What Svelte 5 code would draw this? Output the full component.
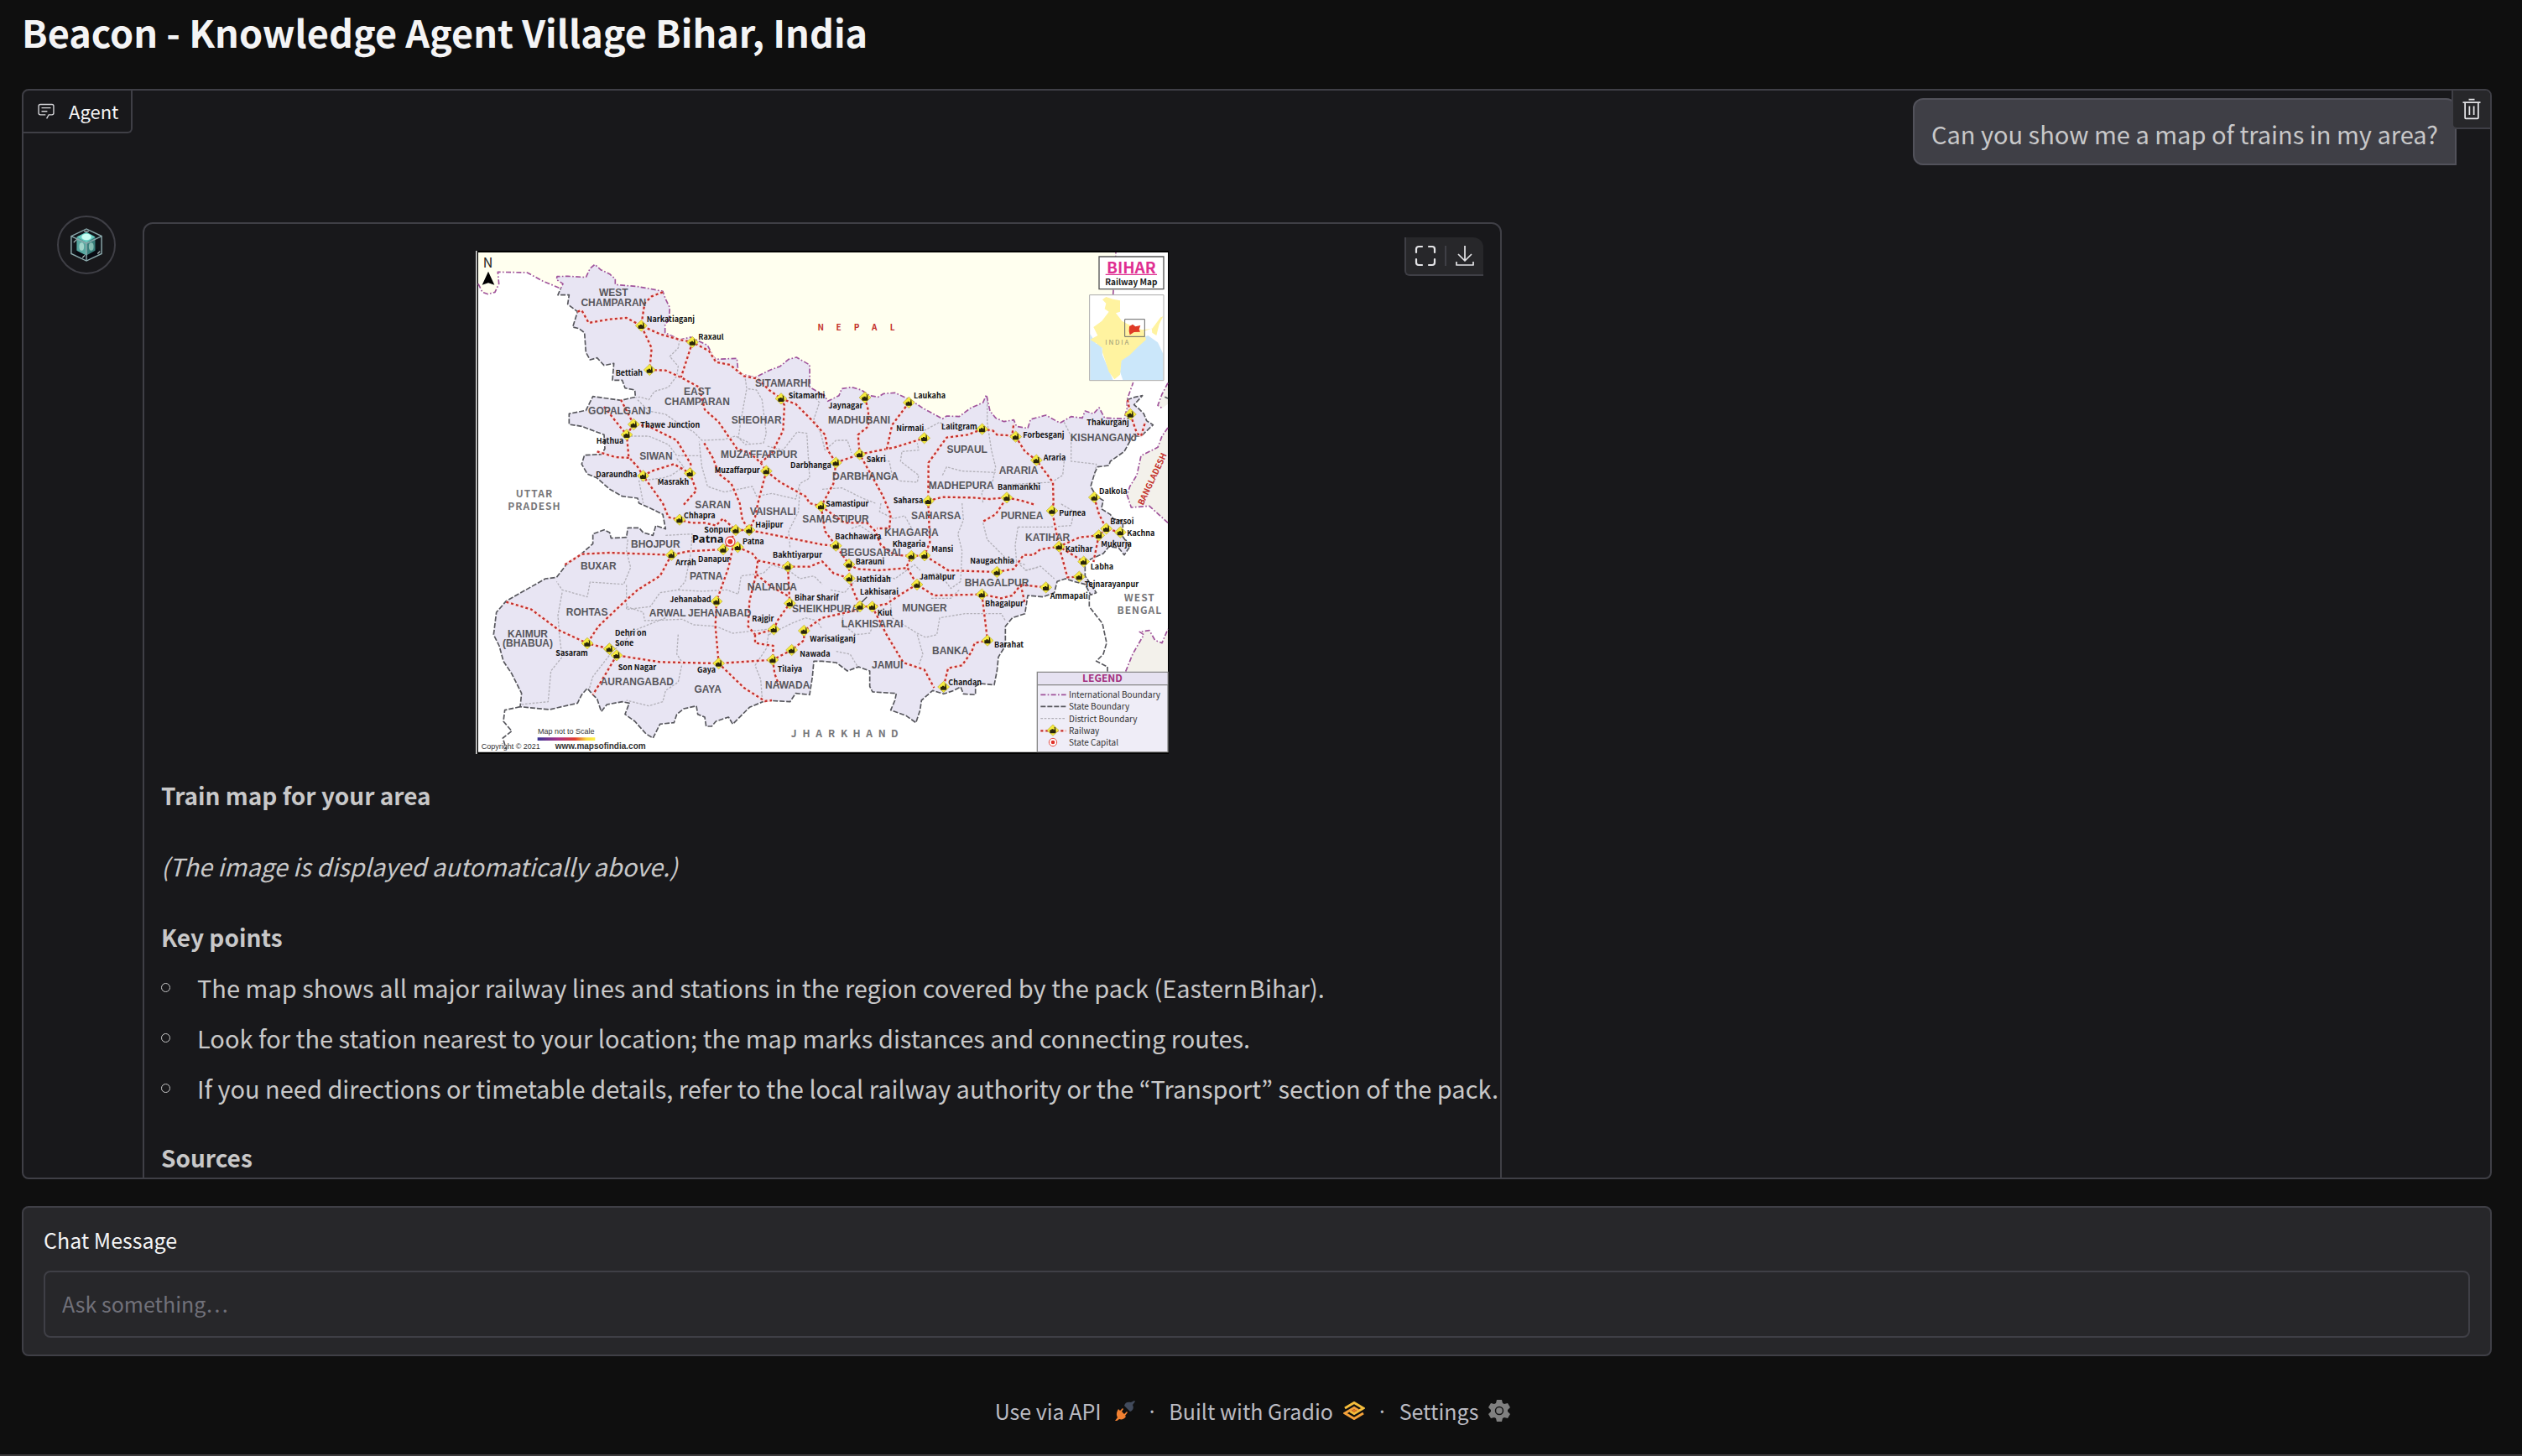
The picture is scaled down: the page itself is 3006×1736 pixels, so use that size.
<script>
    let message = "";

    const points = [
        "The map shows all major railway lines and stations in the region covered by the pack (Eastern\u200aBihar).",
        "Look for the station nearest to your location; the map marks distances and connecting routes.",
        "If you need directions or timetable details, refer to the local railway authority or the “Transport” section of the pack."
    ];

    // name, text x, text y, marker x, marker y
    const stations = [
        ["Narkatiaganj", 632, 281, 613, 295],
        ["Raxaul", 817, 344, 796, 354],
        ["Bettiah", 521, 475, 643, 453],
        ["Thawe Junction", 610, 661, 586, 648],
        ["Hathua", 452, 717, 561, 685],
        ["Daraundha", 451, 838, 620, 832],
        ["Masrakh", 671, 863, 787, 823],
        ["Sitamarhi", 1139, 554, 1113, 556],
        ["Muzaffarpur", 875, 821, 1060, 815],
        ["Darbhanga", 1146, 805, 1309, 785],
        ["Jaynagar", 1282, 591, 1413, 552],
        ["Laukaha", 1587, 556, 1570, 570],
        ["Nirmali", 1525, 673, 1625, 697],
        ["Lalitgram", 1686, 665, 1832, 665],
        ["Forbesganj", 1978, 697, 1952, 692],
        ["Thakurganj", 2206, 650, 2362, 612],
        ["Sakri", 1418, 784, 1394, 755],
        ["Araria", 2051, 777, 2026, 776],
        ["Banmankhi", 1887, 883, 1920, 910],
        ["Dalkola", 2250, 897, 2233, 909],
        ["Saharsa", 1514, 930, 1639, 922],
        ["Samastipur", 1273, 941, 1256, 941],
        ["Purnea", 2107, 975, 2082, 957],
        ["Barsoi", 2290, 1004, 2276, 1021],
        ["Kachna", 2350, 1048, 2326, 1034],
        ["Mukurja", 2257, 1087, 2249, 1045],
        ["Katihar", 2129, 1103, 2107, 1085],
        ["Labha", 2219, 1168, 2195, 1139],
        ["Tejnarayanpur", 2198, 1230, 2179, 1193],
        ["Ammapali", 2075, 1271, 2060, 1231],
        ["Chhapra", 765, 985, 750, 989],
        ["Sonpur", 838, 1034, 951, 1026],
        ["Hajipur", 1021, 1018, 999, 1026],
        ["Patna", 975, 1077, 958, 1087],
        ["Danapur", 816, 1140, 906, 1095],
        ["Arrah", 736, 1151, 721, 1115],
        ["Bakhtiyarpur", 1083, 1126, 1137, 1157],
        ["Jehanabad", 715, 1285, 882, 1281],
        ["Bihar Sharif", 1161, 1279, 1144, 1288],
        ["Rajgir", 1009, 1353, 1087, 1381],
        ["Warisaliganj", 1216, 1425, 1195, 1386],
        ["Nawada", 1180, 1480, 1151, 1455],
        ["Tilaiya", 1100, 1532, 1083, 1490],
        ["Gaya", 813, 1535, 890, 1503],
        ["Sasaram", 307, 1475, 420, 1431],
        ["Dehri on", 519, 1403, 499, 1451],
        ["Sone", 519, 1439, 499, 1451],
        ["Son Nagar", 530, 1527, 525, 1474],
        ["Bachhawara", 1306, 1060, 1309, 1082],
        ["Barauni", 1379, 1149, 1356, 1149],
        ["Khagaria", 1511, 1086, 1579, 1119],
        ["Mansi", 1651, 1104, 1626, 1117],
        ["Hathidah", 1382, 1213, 1357, 1199],
        ["Jamalpur", 1607, 1202, 1599, 1221],
        ["Lakhisarai", 1395, 1258, 1395, 1299],
        ["Kiul", 1457, 1333, 1439, 1300],
        ["Naugachhia", 1789, 1147, 1885, 1176],
        ["Bhagalpur", 1842, 1300, 1831, 1256],
        ["Barahat", 1875, 1447, 1851, 1421],
        ["Chandan", 1711, 1580, 1694, 1587]
    ];

    // name, centre x, baseline y
    const districts = [
        ["WEST", 514, 190], ["CHAMPARAN", 514, 225],
        ["EAST", 813, 542], ["CHAMPARAN", 813, 578],
        ["SITAMARHI", 1119, 513], ["GOPALGANJ", 536, 613],
        ["SHEOHAR", 1025, 645], ["SIWAN", 666, 774],
        ["MUZAFFARPUR", 1034, 769], ["MADHUBANI", 1392, 645],
        ["SUPAUL", 1778, 750], ["KISHANGANJ", 2266, 709],
        ["DARBHANGA", 1414, 847], ["ARARIA", 1962, 825],
        ["MADHEPURA", 1757, 879], ["SARAN", 869, 948],
        ["VAISHALI", 1084, 973], ["SAMASTIPUR", 1308, 999],
        ["SAHARSA", 1667, 987], ["PURNEA", 1974, 987],
        ["KHAGARIA", 1579, 1048], ["KATIHAR", 2066, 1065],
        ["BHOJPUR", 664, 1090], ["BUXAR", 460, 1167],
        ["PATNA", 845, 1203], ["BEGUSARAI", 1433, 1120],
        ["NALANDA", 1081, 1241], ["BHAGALPUR", 1884, 1228],
        ["ROHTAS", 419, 1333], ["ARWAL", 707, 1334],
        ["JEHANABAD", 893, 1334], ["SHEIKHPURA", 1271, 1320],
        ["MUNGER", 1626, 1316], ["LAKHISARAI", 1439, 1375],
        ["KAIMUR", 207, 1409], ["(BHABUA)", 207, 1444],
        ["BANKA", 1718, 1469], ["JAMUI", 1493, 1522],
        ["AURANGABAD", 598, 1580], ["GAYA", 851, 1608],
        ["NAWADA", 1136, 1592]
    ];

    const nepalBorder = "M30 145L45 175L65 182L90 175L104 145L100 103L205 105L260 135L325 162L333 145L310 130L312 119L350 118L415 122L430 90L447 76L468 95L500 110L520 128L520 148L600 155L645 163L690 172L700 200L715 230L712 275L698 290V320L750 345L790 336L850 365L870 405L880 415L955 412L960 465L1020 480L1070 455L1110 440L1140 415L1168 408L1215 435L1216 515L1268 545L1280 565L1320 545L1330 520L1365 515L1400 525L1430 545L1460 550L1480 538L1520 535L1575 560L1620 590L1690 628L1705 618L1750 620L1790 590L1835 570L1847 542L1860 600L1880 625L1910 638L1945 632L1955 655L1995 662L2005 630L2060 615L2110 643L2150 620L2190 625L2200 600L2230 610L2250 588L2270 625L2340 628L2350 590L2350 560L2372 498";

    const stateBorder = "M2350 560L2380 550L2405 545L2375 578L2390 590L2410 610L2420 635L2443 650L2400 690L2370 690L2340 745L2290 780L2285 795L2245 800L2235 820L2220 870L2240 905L2265 920L2258 950L2290 970L2300 985L2335 995L2335 1050L2360 1085L2340 1115L2320 1090L2285 1085L2265 1110L2220 1130L2200 1150L2200 1190L2240 1250L2220 1258L2200 1220L2160 1210L2130 1200L2100 1210L2090 1250L2050 1265L1995 1260L1985 1325L1940 1340L1915 1370V1440L1890 1480L1885 1530L1875 1580L1825 1575L1808 1585V1615L1765 1612L1755 1587L1730 1600L1695 1612L1655 1600L1615 1635L1610 1670L1595 1715L1560 1690L1505 1670L1520 1635L1525 1610L1440 1605L1430 1585V1530L1390 1515L1350 1530L1310 1500L1260 1495L1230 1495L1225 1550L1215 1615L1165 1610L1145 1640L1060 1635L1000 1660L970 1690L940 1720L925 1695L880 1710L865 1728H845L840 1695L815 1685L810 1655L765 1665L740 1685L730 1715L680 1720L655 1770L630 1755L590 1710L555 1685L570 1645L545 1640L490 1650L470 1675L455 1630L440 1615L420 1592L400 1615L385 1645L285 1668L180 1658L185 1610L150 1540L120 1495L105 1440L85 1400L95 1320L130 1280L200 1240L270 1200L310 1195L345 1150L400 1110L440 1075V1040L480 1025L500 1035L505 1055L560 1052L565 1018L605 1018L620 1035L655 1045L665 1010L700 1022L690 970L650 950L605 930L600 912L545 905L500 880L455 840L420 825L400 790L410 758L470 755L483 735L480 685L400 655L355 648V610L415 598L440 548L540 562L592 550L590 525L555 518L545 490L510 490L515 430L480 437L455 410L430 417L415 390L410 320L390 305L368 300L385 245L350 218L355 185L315 185L325 162";

    const districtBorders = [
        "M750 345L745 375L715 405L745 440L740 475L710 515L660 530L640 560L610 550L592 552",
        "M985 485L990 520L980 575L970 630L960 695L985 720L1050 715L1060 680L1045 560L1025 525L990 520",
        "M600 560L640 600L700 612L740 640L800 675L830 705L910 702L950 690L1000 715",
        "M575 690L640 690L710 720L740 760L825 760L820 710",
        "M740 770L765 800L720 830L690 840L605 850L620 930",
        "M825 760L830 800L850 870L910 890L1010 870L1025 905L1080 895L1165 915L1180 860L1215 840L1205 680L1170 675L1120 740L1060 725",
        "M1180 880L1175 960L1140 1030L1145 1090",
        "M1220 535L1250 570L1230 630L1255 680L1270 740L1310 705L1350 705L1365 750",
        "M1430 770L1500 780L1510 830L1535 850L1600 855L1605 830L1540 780L1545 745L1605 740L1600 715",
        "M1625 670L1680 640L1700 655",
        "M1850 550L1850 640L1865 740L1880 800L1870 850L1830 890L1835 930",
        "M1690 830L1705 800L1760 815L1880 820M1260 880L1330 875L1400 910L1450 930",
        "M2125 640L2150 690L2150 780L2240 790L2235 830M2125 780L2120 830L2080 855L1980 860L1900 865",
        "M1470 930L1465 960L1515 985L1555 975L1580 1020M1760 930L1765 990L1745 1040L1760 1100L1755 1210L1720 1235L1680 1180L1640 1185",
        "M1960 1015L2070 1015L2150 1010L2160 960L2110 930M1960 1015L1950 1080L1955 1140L1990 1170L2040 1155L2090 1200",
        "M1835 1000L1850 1060L1890 1100L1920 1130L1985 1150M1365 1020L1395 1010L1455 1050L1480 1060",
        "M565 1060L560 1100L575 1160L550 1220L430 1212L420 1265L330 1240L310 1210",
        "M700 1045L795 1040L790 1110L770 1210L745 1240L680 1250L645 1300L560 1310L560 1220",
        "M745 1240L830 1245L920 1240L960 1255L970 1190L1050 1180L1080 1150L1140 1170",
        "M560 1300L620 1320L625 1350L760 1345L800 1365L880 1370L940 1395L1070 1380",
        "M330 1250L315 1330L320 1400L330 1480L290 1530L280 1640L180 1650",
        "M700 1340L600 1380L510 1460L440 1550L425 1600",
        "M745 1400L740 1470L760 1500L745 1570L700 1600L690 1640L640 1655L560 1635",
        "M1070 1385L1060 1450L1020 1510L1040 1560L1045 1625",
        "M1140 1170L1180 1200L1230 1190L1260 1220M1070 1400L1150 1360L1200 1340L1240 1350L1260 1380",
        "M1290 1240L1340 1250L1375 1210L1460 1185L1520 1200L1590 1150L1610 1170",
        "M1340 1300L1330 1360L1380 1400L1430 1395L1440 1370M1500 1250L1510 1340L1600 1395L1630 1410L1670 1400L1680 1340L1770 1325L1900 1325L1915 1350",
        "M1600 1400L1620 1470L1605 1510M1650 1270L1720 1270L1750 1240M1985 1170L2030 1160M1310 1460L1360 1470L1390 1520"
    ];

    const railways = [
        "M690 175L650 190L625 215L618 260L613 295L650 375L643 453L700 455L755 480L820 515L840 595L890 640L955 735L1000 750L1040 785L1060 815",
        "M385 245L400 240L425 285L500 272L560 267L613 295L680 325L750 345L796 354L855 385L880 425L930 435L980 475L1030 485L1070 525L1113 556L1165 575L1220 630L1270 685L1280 740L1309 785",
        "M796 354L755 480",
        "M1113 556L1125 580L1120 670L1080 750L1040 785",
        "M540 560L586 648L640 655L740 705L790 790L787 823L810 885L765 935",
        "M480 585L540 660L561 685L568 765L600 800L620 832L690 930",
        "M586 648L561 685M455 745L520 765L575 768M620 832L650 815L730 790L787 823",
        "M838 715L870 770L890 825L935 860L965 930L975 990L999 1026",
        "M1060 815L1030 930L1020 980L999 1026M1060 815L1110 855L1200 905L1215 930L1256 941",
        "M1309 785L1394 755L1520 730L1625 697M1309 785L1300 860L1256 941",
        "M1413 552L1425 600L1425 655L1388 685L1394 755L1475 900L1505 970L1500 1020L1455 1020",
        "M1570 570L1510 650L1490 740",
        "M1832 665L1780 685L1705 695L1640 785L1639 922L1645 1070L1626 1117",
        "M1832 665L1870 670L1885 685L1935 688L1952 692L1985 745L2026 776L2085 855L2087 930L2082 957L2107 1085L2137 1195L2179 1193",
        "M1952 692L1940 680L1945 645",
        "M2352 560L2362 612L2385 680L2400 690L2415 640",
        "M1639 922L1690 908L1800 910L1860 915L1920 910L1880 970L1835 995M1920 910L1970 920L2020 935",
        "M2233 909L2250 970L2276 1021L2326 1034M2276 1021L2249 1045L2180 1052L2107 1085L2195 1139M2249 1045L2230 1140",
        "M690 930L710 980L750 989L790 1000L840 1000L880 1010L905 985L951 1026L999 1026L1145 1055L1260 1078L1309 1082",
        "M1256 941L1270 1030L1309 1082L1356 1149L1357 1199L1370 1240L1395 1299",
        "M1256 941L1340 1000L1420 1000L1450 1030L1470 1080L1520 1115L1579 1119L1626 1117L1710 1170L1885 1176L1945 1165L1980 1115L2015 1115L2040 1095L2107 1085",
        "M1356 1149L1385 1165L1460 1170L1560 1162L1579 1119M1565 1162L1599 1221L1660 1260L1831 1256L1900 1270L1940 1260L1970 1222L2060 1231M1970 1222L1985 1290",
        "M340 1150L400 1112L500 1107L721 1115L780 1102L906 1095L931 1067L951 1026",
        "M721 1115L680 1190L600 1240L550 1285L460 1370L420 1431",
        "M958 1087L1010 1110L1030 1135L1020 1200L1000 1280L995 1370L1020 1400L1087 1381M1030 1135L1137 1157L1215 1157L1260 1138L1300 1180L1357 1199",
        "M1137 1157L1144 1288L1100 1350L1087 1381M1025 1185L1080 1230L1144 1265M1020 1400L1020 1430L1085 1440L1083 1490",
        "M940 1090L925 1160L900 1230L882 1281L878 1370L890 1503L1083 1490L1151 1455L1195 1420L1195 1386L1260 1340L1395 1310",
        "M130 1283L220 1310L320 1385L420 1431L499 1451L525 1474L680 1498L890 1503L980 1590L1055 1638L1080 1635",
        "M525 1474L480 1550L440 1615M1083 1490L1090 1540L1105 1580",
        "M1395 1299L1439 1300L1490 1290L1550 1250L1599 1221M1439 1300L1490 1400L1550 1500L1625 1525L1660 1590",
        "M1831 1256L1845 1370L1851 1421L1805 1430L1795 1460L1760 1510L1710 1520L1694 1587"
    ];
</script>

<div class="page">
    <h1>Beacon - Knowledge Agent Village Bihar, India</h1>

    <main>
        <section class="chat" aria-label="Agent">
            <div class="block-label">
                <svg class="label-icon" viewBox="0 0 32 32" aria-hidden="true">
                    <path d="M17.74 30L16 29l4-7h6a2 2 0 0 0 2-2V8a2 2 0 0 0-2-2H6a2 2 0 0 0-2 2v12a2 2 0 0 0 2 2h9v2H6a4 4 0 0 1-4-4V8a4 4 0 0 1 4-4h20a4 4 0 0 1 4 4v12a4 4 0 0 1-4 4h-4.840Z" />
                    <path d="M8 10h16v2H8zm0 6h10v2H8z" />
                </svg>
                <span>Agent</span>
            </div>

            <button class="clear" aria-label="Clear">
                <svg viewBox="0 0 32 32" aria-hidden="true">
                    <path d="M12 12h2v12h-2zm6 0h2v12h-2z" />
                    <path d="M4 6v2h2v20a2 2 0 0 0 2 2h16a2 2 0 0 0 2-2V8h2V6zm4 22V8h16v20zm4-26h8v2h-8z" />
                </svg>
            </button>

            <div class="user-row">
                <p class="bubble user">Can you show me a map of trains in my area?</p>
            </div>

            <div class="bot-row">
                <div class="avatar">
                    <svg viewBox="0 0 42 44" aria-hidden="true">
                        <path d="M3 11L21 2l18 9v22l-18 9L3 33z" fill="#10151a" />
                        <path d="M8 28l13 7 14-8v8l-14 7-13-6z" fill="#070a12" />
                        <path d="M9 12l12-6 11 6v17l-11 6-12-6z" fill="#397f7c" />
                        <path d="M9 12l12-6 11 6-11 7z" fill="#69cec3" />
                        <path d="M21 19v16l-12-6V12z" fill="#58a8a1" />
                        <ellipse cx="21" cy="12" rx="6" ry="4" fill="#c9fff4" />
                        <ellipse cx="15" cy="24" rx="3" ry="5" fill="#a2d5cb" />
                        <ellipse cx="27" cy="24" rx="3" ry="5" fill="#86bdb3" />
                        <path d="M2 11L21 2l19 9v22l-19 9-19-9zM2 11l19 9 19-9M21 20v22" fill="none" stroke="#8ba9ac" stroke-width="1.500" />
                        <path d="M5 19l4-4M16 38l3-3M35 33l3-3M18 5h6" stroke="#b6c6c6" stroke-width="1.200" />
                    </svg>
                </div>

                <div class="bubble bot">
                    <div class="picture">
                        <svg class="map" viewBox="21 27 2478 1800" role="img" aria-label="Bihar railway map">
                            <defs>
                                <g id="station">
                                    <path d="M0-20L21 0L0 20L-21 0z" fill="#f7ec3d" stroke="#b5a83c" stroke-width="2" />
                                    <path d="M-11 9V-1H-5V-4H2V-1H5L6-9L2-12L9-10L11 8L8 11H-8z" fill="#29240b" />
                                </g>
                                <linearGradient id="scale">
                                    <stop offset="0" stop-color="#3b3594" />
                                    <stop offset="0.350" stop-color="#a8318a" />
                                    <stop offset="0.650" stop-color="#e23b2e" />
                                    <stop offset="0.850" stop-color="#f9d83c" />
                                    <stop offset="1" stop-color="#fdf04a" />
                                </linearGradient>
                            </defs>
                            <path d="M21 27H2499V1827H21z" fill="#000" />
                            <path d="M21 27h5v1800h-5z" fill="#d8d8d8" />
                            <path d="M30 33H2496V1820H30z" fill="#fff" />

                            <path d="{nepalBorder}L2300 180L2310 33H30z" fill="#ffffef" />
                            <path d="{stateBorder}{nepalBorder.slice(nepalBorder.indexOf('L333'))}z" fill="#e8e5f3" />
                            <g class="bangladesh">
                                <path d="M2496 660L2475 690L2460 730L2400 760L2385 830L2360 870L2350 900L2365 945L2430 940L2496 1000z" />
                                <path d="M2345 1532L2370 1470L2410 1400L2395 1390L2430 1385L2450 1420L2475 1430L2496 1380V1532z" />
                                <path d="M2496 500L2475 540L2460 580L2475 590L2496 575z" />
                            </g>

                            {#each districtBorders as d}
                                <path class="district-line" {d} />
                            {/each}
                            <path class="state-line" d={stateBorder} />
                            <path class="state-line" d="M180 1658L125 1670L120 1710L150 1745L118 1770L130 1810" />
                            <path class="state-line" d="M2215 1258V1300L2262 1360L2277 1430L2265 1470L2240 1495L2280 1515V1532M2485 550L2496 555" />
                            <path class="nation-line" d={nepalBorder} />
                            <path class="nation-line" d="M2300 185L2310 33M2496 660L2475 690L2460 730L2400 760L2385 830L2360 870L2350 900L2365 945L2430 940L2496 1000M2345 1532L2370 1470L2410 1400L2395 1390L2430 1385L2450 1420L2475 1430L2496 1380M2496 500L2475 540L2460 580L2475 590" />

                            {#each railways as d}
                                <path class="rail-bed" {d} />
                                <path class="rail" {d} />
                            {/each}

                            {#each districts as [name, x, y]}
                                <text class="district" {x} {y}>{name}</text>
                            {/each}

                            <path d="M1395 1290L1420 1265" stroke="#444" stroke-width="4" />
                            {#each stations as [name, x, y, sx, sy]}
                                <use href="#station" x={sx} y={sy} />
                                <text class="station" {x} {y}>{name}</text>
                            {/each}

                            <circle cx="931" cy="1067" r="17" fill="#fff" stroke="#e44b42" stroke-width="4" />
                            <circle cx="931" cy="1067" r="9" fill="#df3129" />
                            <text class="capital" x="794" y="1072">Patna</text>

                            <text class="north" x="47" y="86">N</text>
                            <path d="M66 101L88 149L66 142L44 149z" fill="#000" />
                            {#each "NEPAL".split("") as letter, i}
                                <text class="country" x={1255 + i * 64} y="313">{letter}</text>
                            {/each}
                            {#each ["UTTAR", "PRADESH"] as word, i}
                                <text class="region" x="231" y={909 + i * 45}>{word}</text>
                            {/each}
                            {#each ["WEST", "BENGAL"] as word, i}
                                <text class="region" x="2395" y={1281 + i * 44}>{word}</text>
                            {/each}
                            {#each "JHARKHAND".split("") as letter, i}
                                <text class="region" x={1160 + i * 45} y="1767">{letter}</text>
                            {/each}
                            <text class="country" transform="translate(2450 848) rotate(-65)">BANGLADESH</text>

                            <path d="M2250 78H2481V194H2250z" fill="#fff" stroke="#555" stroke-width="4" transform="translate(0 -30)" />
                            <text class="map-title" x="2365" y="107">BIHAR</text>
                            <path d="M2273 112H2457" stroke="#df2f92" stroke-width="4" />
                            <text class="map-subtitle" x="2365" y="151">Railway Map</text>

                            <path d="M2216 185H2481V491H2216z" fill="#fff" />
                            <path d="M2218 325L2240 360L2260 352L2262 400L2300 489H2218zM2425 330L2460 355L2479 395V489H2335L2325 460L2330 410L2400 340z" fill="#cbe7fa" />
                            <path d="M2262 202L2275 192L2300 200L2325 205V245L2310 250L2332 278L2350 288L2390 305L2405 310L2440 305L2470 265L2479 262L2465 290L2455 330L2440 320L2438 305L2410 315L2418 345L2390 370L2360 400L2330 420L2325 470L2305 487L2285 460L2262 390V375L2240 358L2218 345L2245 330L2230 300L2260 278L2285 245L2270 235L2275 215z" fill="#fff3a0" />
                            <path d="M2358 298L2370 290L2380 298L2398 294L2393 308L2397 317L2375 318L2360 328L2357 315z" fill="#df3a27" />
                            <path d="M2342 272H2413V334H2342z" fill="none" stroke="#666" stroke-width="3" />
                            <text class="inset-name" x="2314" y="362">I N D I A</text>
                            <path d="M2216 185H2481V491H2216z" fill="none" stroke="#aaa" stroke-width="3" />

                            <path d="M2029 1534H2496V1820H2029z" fill="#efedf7" stroke="#888" stroke-width="4" />
                            <path d="M2031 1536H2494V1580H2031z" fill="#e6e2f1" />
                            <path d="M2029 1580H2496" stroke="#888" stroke-width="4" />
                            <text class="legend-title" x="2262" y="1569">LEGEND</text>
                            <path class="nation-line" d="M2041 1615H2132" />
                            <path class="state-line" d="M2041 1657H2132" />
                            <path class="district-line" d="M2041 1700H2132" />
                            <path class="rail-bed" d="M2041 1744H2132" />
                            <path class="rail" d="M2041 1744H2132" />
                            <use href="#station" x="2085" y="1742" />
                            <circle cx="2085" cy="1785" r="14" fill="#fff" stroke="#e44b42" stroke-width="3" />
                            <circle cx="2085" cy="1785" r="7" fill="#df3129" />
                            {#each ["International Boundary", "State Boundary", "District Boundary", "Railway", "State Capital"] as entry, i}
                                <text class="legend" x="2142" y={1626 + i * 43}>{entry}</text>
                            {/each}

                            <text class="note" x="243" y="1754">Map not to Scale</text>
                            <path d="M242 1768H448V1779H242z" fill="url(#scale)" />
                            <text class="note" x="41" y="1810">Copyright © 2021</text>
                            <text class="note site" x="305" y="1810">www.mapsofindia.com</text>
                        </svg>

                        <div class="tools">
                            <button aria-label="View in full screen">
                                <svg viewBox="0 0 24 24" aria-hidden="true" fill="none" stroke="currentColor" stroke-width="2.200" stroke-linecap="round" stroke-linejoin="round">
                                    <path d="M8 1H4a3 3 0 0 0-3 3v4M16 1h4a3 3 0 0 1 3 3v4M1 16v4a3 3 0 0 0 3 3h4M23 16v4a3 3 0 0 1-3 3h-4" />
                                </svg>
                            </button>
                            <button aria-label="Download">
                                <svg viewBox="0 0 24 24" aria-hidden="true" fill="none" stroke="currentColor" stroke-width="1.700" stroke-linejoin="round">
                                    <path d="M12 0v18M4 10l8 8 8-8M2 19v4h20v-4" />
                                </svg>
                            </button>
                        </div>
                    </div>

                    <p><strong>Train map for your area</strong></p>
                    <p><em>(The image is displayed automatically above.)</em></p>
                    <p class="tight"><strong>Key points</strong></p>
                    <ul>
                        {#each points as point}
                            <li>{point}</li>
                        {/each}
                    </ul>
                    <p><strong>Sources</strong></p>
                </div>
            </div>
        </section>

        <section class="composer">
            <label for="message">Chat Message</label>
            <input id="message" type="text" placeholder="Ask something…" bind:value={message} />
        </section>
    </main>

    <footer>
        <a href="#api">
            Use via API
            <svg class="plug" viewBox="0 0 24 24" aria-hidden="true">
                <path d="M23 0l1 1-3 4c2 4 0 7-3 8L11 6c1-4 4-5 8-4z" fill="#414a5b" />
                <path d="M4 10l2 2 3-3 1 1-2 3 3 3 3-3 1 1-3 4 1 1c-2 3-5 4-8 3l-4 3-1-1 3-4c-2-3-1-7 1-10z" fill="#f08031" />
            </svg>
        </a>
        <span class="dot">·</span>
        <a href="#gradio">
            Built with Gradio
            <svg class="logo" viewBox="0 0 26 22" aria-hidden="true" fill="none" stroke-width="3">
                <path d="M2 8l11-6.500L24 8 13 14.500l-5-3" stroke="#f5bd3b" />
                <path d="M24 14l-11 6.500L2 14l11-6.500 5 3" stroke="#f4a13a" />
                <path d="M10 11l3-2 3 2-3 2z" fill="#e87824" stroke="none" />
            </svg>
        </a>
        <span class="dot">·</span>
        <a href="#settings">
            Settings
            <svg class="gear" viewBox="0 0 26 26" aria-hidden="true">
                <path d="M10 0h6l1 4 2 1 4-1 3 5-3 3v2l3 3-3 5-4-1-2 1-1 4h-6l-1-4-2-1-4 1-3-5 3-3v-2L0 9l3-5 4 1 2-1z" fill="#808080" />
                <circle cx="13" cy="13" r="4.500" fill="#808080" stroke="#151515" stroke-width="1.500" />
            </svg>
        </a>
    </footer>
</div>

<style>
    :global(body) {
        background: #0f0f0f;
    }

    .page {
        box-sizing: border-box;
        display: flex;
        flex-direction: column;
        height: 100vh;
        padding: 8px 36px 0 26px;
        overflow: hidden;
        border-bottom: 2px solid #3a3839;
        color: #f4f4f5;
        font-family: "Noto Sans CJK KR", "Noto Sans", sans-serif;
    }

    h1 {
        margin: 0 0 38px;
        font-size: 45px;
        line-height: 60px;
        font-weight: 700;
    }

    main {
        display: flex;
        flex: 1;
        flex-direction: column;
        gap: 32px;
        min-height: 0;
    }

    button {
        display: flex;
        align-items: center;
        justify-content: center;
        margin: 0;
        padding: 0;
        border: none;
        background: none;
        color: #e4e4e7;
        cursor: pointer;
    }

    .chat {
        position: relative;
        flex: 1;
        min-height: 0;
        overflow: hidden;
        border: 2px solid #3f3f46;
        border-radius: 8px;
        background: #18181b;
    }

    .block-label {
        position: absolute;
        top: 0;
        left: 0;
        display: flex;
        align-items: center;
        gap: 16px;
        height: 47px;
        padding: 0 15px 2px 16px;
        border-right: 2px solid #3f3f46;
        border-bottom: 2px solid #3f3f46;
        border-radius: 0 0 6px 0;
        font-size: 22px;
        line-height: 36px;
    }

    .label-icon {
        width: 22px;
        height: 22px;
        fill: #d4d4d8;
    }

    .clear {
        position: absolute;
        top: 0;
        right: 0;
        width: 46px;
        height: 46px;
        border-bottom: 2px solid #3f3f46;
        border-left: 2px solid #3f3f46;
        border-radius: 0 0 0 6px;
        background: #27272a;
    }

    .clear svg {
        width: 28px;
        height: 28px;
        fill: #e4e4e7;
    }

    .bubble {
        box-sizing: border-box;
        margin: 0;
        border: 2px solid #3f3f46;
        border-radius: 12px;
        padding: 16px 20px 12px;
        color: #c8c8c9;
        font-size: 29px;
        line-height: 48px;
    }

    .user-row {
        display: flex;
        justify-content: flex-end;
        padding: 9px 40px 60px;
    }

    .user {
        border-color: #52525b;
        border-bottom-right-radius: 0;
        background: #3f3f46;
    }

    .bot-row {
        display: flex;
        align-items: flex-start;
        gap: 32px;
        padding: 0 40px;
    }

    .bot {
        max-width: 1620px;
        margin-top: 8px;
    }

    .avatar {
        box-sizing: border-box;
        display: flex;
        flex: none;
        align-items: center;
        justify-content: center;
        width: 70px;
        height: 70px;
        border: 2px solid #3f3f46;
        border-radius: 50%;
    }

    .avatar svg {
        width: 40px;
        height: 42px;
    }

    .picture {
        position: relative;
        display: flex;
        justify-content: center;
        padding: 16px 0 24px;
    }

    .map {
        width: 826px;
        height: 600px;
    }

    .tools {
        position: absolute;
        top: 0;
        right: 0;
        display: flex;
        align-items: center;
        height: 44px;
        border-bottom: 2px solid #3f3f46;
        border-left: 2px solid #3f3f46;
        border-radius: 0 12px 0 6px;
        background: #27272a;
    }

    .tools button {
        width: 46px;
        height: 24px;
    }

    .tools button + button {
        border-left: 2px solid #3f3f46;
    }

    .tools svg {
        width: 24px;
        height: 24px;
        overflow: visible;
    }

    .bot p {
        margin: 0 0 36px;
    }

    .bot p.tight {
        margin-bottom: 12px;
    }

    .bot strong {
        font-size: 28px;
    }

    .bot ul {
        margin: 0 0 34px;
        padding: 0;
        list-style: none;
    }

    .bot li {
        display: flex;
        align-items: center;
        gap: 32px;
        white-space: nowrap;
    }

    .bot li + li {
        margin-top: 12px;
    }

    .bot li::before {
        content: "";
        box-sizing: border-box;
        flex: none;
        width: 11px;
        height: 11px;
        border: 1px solid #c8c8c9;
        border-radius: 50%;
    }

    .bangladesh {
        fill: #f3f1eb;
    }

    .district-line,
    .state-line,
    .nation-line,
    .rail-bed,
    .rail {
        fill: none;
        stroke-linejoin: round;
    }

    .district-line {
        stroke: #b3b1b9;
        stroke-width: 4;
        stroke-dasharray: 8 5;
    }

    .state-line {
        stroke: #57575d;
        stroke-width: 5;
        stroke-dasharray: 18 6;
    }

    .nation-line {
        stroke: #a0539b;
        stroke-width: 5;
        stroke-dasharray: 18 7 5 7;
    }

    .rail-bed {
        stroke: #f6dfe1;
        stroke-width: 9;
    }

    .rail {
        stroke: #c5302d;
        stroke-width: 7;
        stroke-dasharray: 9 9;
    }

    .district {
        fill: #57565b;
        font: bold 36px "Liberation Sans", sans-serif;
        text-anchor: middle;
    }

    .station {
        fill: #111;
        font: bold 27px "Noto Sans CJK KR", sans-serif;
    }

    .capital {
        fill: #111;
        font: bold 39px "Open Sans", sans-serif;
    }

    .north {
        fill: #222;
        font: 48px "Noto Sans CJK KR", sans-serif;
    }

    .country {
        fill: #c4322d;
        font: bold 30px "Noto Sans CJK KR", sans-serif;
        text-anchor: middle;
    }

    .region {
        fill: #77777a;
        font: bold 36px "Noto Sans CJK KR", sans-serif;
        letter-spacing: 3px;
        text-anchor: middle;
    }

    .map-title {
        fill: #df2f92;
        font: bold 57px "Noto Sans CJK KR", sans-serif;
        text-anchor: middle;
    }

    .map-subtitle {
        fill: #222;
        font: bold 30px "Noto Sans CJK KR", sans-serif;
        text-anchor: middle;
    }

    .inset-name {
        fill: #9b9774;
        font: 24px "Noto Sans CJK KR", sans-serif;
        text-anchor: middle;
    }

    .legend-title {
        fill: #a3317f;
        font: bold 36px "Noto Sans CJK KR", sans-serif;
        text-anchor: middle;
    }

    .legend {
        fill: #333;
        font: 30px "Noto Sans CJK KR", sans-serif;
    }

    .note {
        fill: #333;
        font: 27px "Liberation Sans", sans-serif;
    }

    .site {
        font-size: 30px;
        font-weight: bold;
    }

    .composer {
        display: flex;
        flex-direction: column;
        gap: 19px;
        padding: 20px 24px;
        border: 2px solid #3f3f46;
        border-radius: 8px;
        background: #27272a;
    }

    label {
        font-size: 25px;
        line-height: 36px;
    }

    input {
        box-sizing: border-box;
        width: 100%;
        height: 80px;
        padding: 0 20px 2px;
        border: 2px solid #3f3f46;
        border-radius: 8px;
        background: #27272a;
        color: #f4f4f5;
        font-family: inherit;
        font-size: 25px;
    }

    input::placeholder {
        color: #71717a;
    }

    footer {
        display: flex;
        align-items: center;
        justify-content: center;
        padding: 47px 10px 34px 0;
        color: #bbbbc2;
        font-size: 25px;
        line-height: 36px;
    }

    footer a {
        display: flex;
        align-items: center;
        gap: 12px;
        color: inherit;
        text-decoration: none;
    }

    .dot {
        padding: 0 17px;
        font-family: "Noto Sans", sans-serif;
    }

    .plug {
        width: 24px;
        height: 24px;
        margin-left: 4px;
    }

    .logo {
        width: 26px;
        height: 22px;
    }

    .gear {
        width: 26px;
        height: 26px;
    }
</style>
